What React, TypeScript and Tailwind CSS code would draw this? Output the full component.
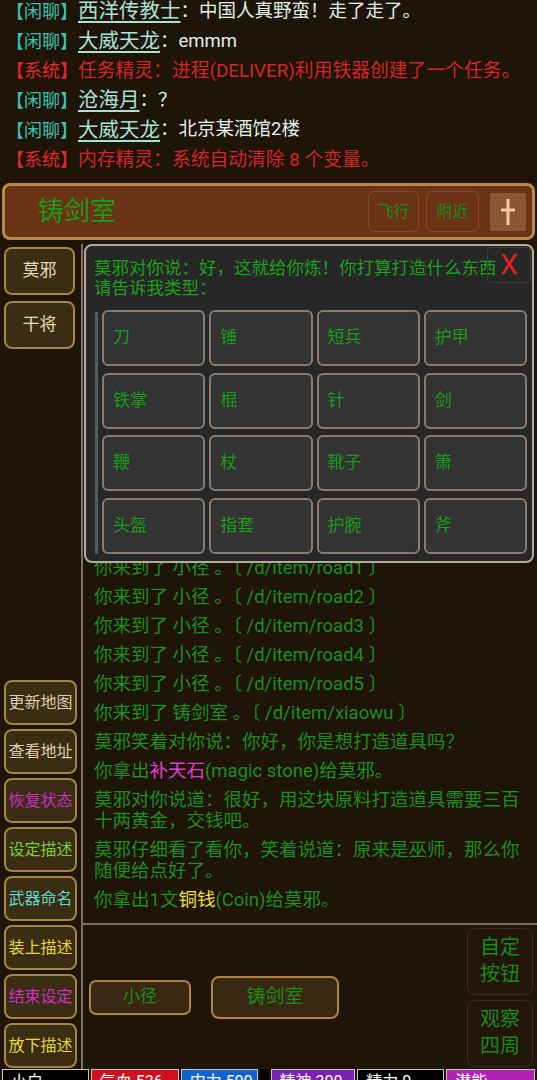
import React from "react";

type ChatLine = { kind: "chat" | "sys"; name?: string; text: string };

const CHAT: ChatLine[] = [
  { kind: "chat", name: "西洋传教士", text: "：中国人真野蛮！走了走了。" },
  { kind: "chat", name: "大威天龙", text: "：emmm" },
  { kind: "sys", text: "任务精灵：进程(DELIVER)利用铁器创建了一个任务。" },
  { kind: "chat", name: "沧海月", text: "：？" },
  { kind: "chat", name: "大威天龙", text: "：北京某酒馆2楼" },
  { kind: "sys", text: "内存精灵：系统自动清除 8 个变量。" },
];

const TYPES = [
  "刀", "锤", "短兵", "护甲",
  "铁掌", "棍", "针", "剑",
  "鞭", "杖", "靴子", "箫",
  "头盔", "指套", "护腕", "斧",
];

const SIDE_BUTTONS: { label: string; color: string }[] = [
  { label: "更新地图", color: "text-[#dccbb0]" },
  { label: "查看地址", color: "text-[#dccbb0]" },
  { label: "恢复状态", color: "text-[#c42fc4]" },
  { label: "设定描述", color: "text-[#74d03c]" },
  { label: "武器命名", color: "text-[#5fd6c8]" },
  { label: "装上描述", color: "text-[#e6d83c]" },
  { label: "结束设定", color: "text-[#d02ec4]" },
  { label: "放下描述", color: "text-[#e6d83c]" },
];

const ROADS = ["road1", "road2", "road3", "road4", "road5"];

const FONT = "font-['Roboto','Noto_Sans_CJK_SC',sans-serif]";

function LogEntry({ children }: { children: React.ReactNode }) {
  return <p className="mt-[8px] whitespace-pre-wrap text-[18.5px] leading-[21px] text-[#1d8f1d]">{children}</p>;
}

export default function App() {
  return (
    <div className={`flex h-[1080px] w-[537px] flex-col overflow-hidden bg-[#1f1408] ${FONT}`}>
      {/* chat channel */}
      <div className="h-[180px] shrink-0 px-[6px]">
        <div className="-mt-[3px] flex flex-col">
          {CHAT.map((c, i) => (
            <div key={i} className="flex h-[29.6px] items-center whitespace-nowrap text-[18.5px]">
              {c.kind === "chat" ? (
                <>
                  <span className="text-[18px] text-[#3cc0b0]">【闲聊】</span>
                  <span className="text-[20.5px] text-[#a8e2d8] underline underline-offset-[3px]">{c.name}</span>
                  <span className="text-[#e0f0ea]">{c.text}</span>
                </>
              ) : (
                <>
                  <span className="text-[18px] text-[#e42a2a]">【系统】</span>
                  <span className="text-[18.8px] text-[#d42626]">{c.text}</span>
                </>
              )}
            </div>
          ))}
        </div>
      </div>

      {/* room title bar */}
      <div className="mx-[2px] mt-[3px] flex h-[57px] shrink-0 items-center rounded-[8px] border-[3px] border-[#b98a45] bg-[#6a3316] pl-[33px] pr-[6px]">
        <span className="flex-1 text-[26px] text-[#1a9a1a]">铸剑室</span>
        <div className="flex h-[41px] w-[51px] items-center justify-center rounded-[6px] border border-[#8a4a26] text-[16px] text-[#1a8a1a]">
          飞行
        </div>
        <div className="ml-[7px] flex h-[41px] w-[53px] items-center justify-center rounded-[6px] border border-[#8a4a26] text-[16px] text-[#1a8a1a]">
          附近
        </div>
        <div className="ml-[11px] flex h-[38px] w-[36px] items-center justify-center bg-[#8b5536]">
          <svg width="16" height="26" viewBox="0 0 16 26">
            <line x1="8" y1="0" x2="8" y2="26" stroke="#f5caa2" strokeWidth="3" />
            <line x1="1" y1="11" x2="15" y2="11" stroke="#f5caa2" strokeWidth="3" />
          </svg>
        </div>
      </div>

      {/* main */}
      <div className="mt-[4px] flex h-[825px] shrink-0">
        {/* left column */}
        <div className="flex w-[83px] shrink-0 flex-col border-r-[2px] border-[#7d6e5e] pl-[4px]">
          <div className="mt-[3px] flex h-[48px] w-[71px] items-center justify-center rounded-[8px] border-2 border-[#a58545] bg-[#3b2d13] text-[17px] text-[#ead8b8]">
            莫邪
          </div>
          <div className="mt-[6px] flex h-[48px] w-[71px] items-center justify-center rounded-[8px] border-2 border-[#a58545] bg-[#3b2d13] text-[17px] text-[#ead8b8]">
            干将
          </div>
          <div className="flex-1" />
          <div className="flex flex-col gap-[4px] pb-[1px]">
            {SIDE_BUTTONS.map((b) => (
              <div
                key={b.label}
                className={`flex h-[45px] w-[73px] items-center justify-center rounded-[8px] border-2 border-[#a58545] bg-[#3b2d13] text-[16px] ${b.color}`}
              >
                {b.label}
              </div>
            ))}
          </div>
        </div>

        {/* right */}
        <div className="relative flex min-w-0 flex-1 flex-col">
          <div className="flex flex-1 flex-col justify-end overflow-hidden pb-[12px] pl-[11px] pr-[8px]">
            {ROADS.map((r) => (
              <LogEntry key={r}>{`你来到了 小径 。〔 /d/item/${r} 〕`}</LogEntry>
            ))}
            <LogEntry>{"你来到了 铸剑室 。〔 /d/item/xiaowu 〕"}</LogEntry>
            <LogEntry>莫邪笑着对你说：你好，你是想打造道具吗？</LogEntry>
            <LogEntry>
              你拿出<span className="text-[#e23ed2]">补天石</span>(magic stone)给莫邪。
            </LogEntry>
            <LogEntry>莫邪对你说道：很好，用这块原料打造道具需要三百十两黄金，交钱吧。</LogEntry>
            <LogEntry>莫邪仔细看了看你，笑着说道：原来是巫师，那么你随便给点好了。</LogEntry>
            <LogEntry>
              你拿出1文<span className="text-[#f2e43e]">铜钱</span>(Coin)给莫邪。
            </LogEntry>
          </div>

          <div className="flex h-[146px] shrink-0 items-center border-t-2 border-[#7d7060] pl-[6px] pr-[4px]">
            <div className="flex h-[35px] w-[102px] items-center justify-center rounded-[7px] border-2 border-[#b08244] bg-[#382812] text-[17px] text-[#1a8c1a]">
              小径
            </div>
            <div className="ml-[20px] flex h-[43px] w-[128px] items-center justify-center rounded-[8px] border-2 border-[#b08244] bg-[#382812] text-[19px] text-[#1a8c1a]">
              铸剑室
            </div>
            <div className="flex-1" />
            <div className="flex flex-col gap-[5px]">
              <div className="flex h-[67px] w-[66px] items-center justify-center rounded-[8px] border border-[#3e2c1a] bg-[#22160a] text-center text-[20px] leading-[27px] text-[#1a8a1a]">
                自定
                <br />
                按钮
              </div>
              <div className="flex h-[67px] w-[66px] items-center justify-center rounded-[8px] border border-[#3e2c1a] bg-[#22160a] text-center text-[20px] leading-[27px] text-[#1a8a1a]">
                观察
                <br />
                四周
              </div>
            </div>
          </div>

          {/* forge dialog */}
          <div className="absolute left-[1px] top-0 flex h-[319px] w-[450px] flex-col rounded-[8px] border-2 border-[#b3ab9b] bg-[#272727]">
            <div className="whitespace-nowrap pl-[8px] pt-[12px] text-[17.5px] leading-[20px] text-[#1aa01a]">
              <div>莫邪对你说：好，这就给你炼！你打算打造什么东西</div>
              <div>请告诉我类型：</div>
            </div>
            <div className="absolute right-[1px] top-[1px] flex h-[36px] w-[44px] items-center justify-center rounded-[4px] border border-[#3e3e3e] text-[28px] leading-none text-[#e42020]">
              X
            </div>
            <div className="mt-[12px] flex pl-[9px] pr-[5px]">
              <div className="mt-[2px] w-[3px] bg-[#4f5e64]" />
              <div className="ml-[4px] grid flex-1 grid-cols-4 gap-x-[4px] gap-y-[6.5px]">
                {TYPES.map((t) => (
                  <div
                    key={t}
                    className="flex h-[56px] items-center rounded-[6px] border-2 border-[#8a7b6f] bg-[#333333] pl-[9px] text-[17px] text-[#1a9a1a]"
                  >
                    {t}
                  </div>
                ))}
              </div>
            </div>
          </div>
        </div>
      </div>

      {/* status bar */}
      <div className="flex h-[30px] shrink-0 gap-[2px] px-[2px] text-[16px] leading-[20px] text-white">
        <div className="w-[87px] border border-[#c8c8c8] bg-black pl-[8px] pt-[2px]">小白</div>
        <div className="w-[88px] border border-[#c8c8c8] bg-[#d01020] pl-[8px] pt-[2px]">气血 536</div>
        <div className="w-[77px] border border-[#c8c8c8] bg-[#1262d0] pl-[8px] pt-[2px]">内力 500</div>
        <div className="w-[9px] bg-black" />
        <div className="w-[85px] border border-[#c8c8c8] bg-[#7a22b2] pl-[8px] pt-[2px]">精神 300</div>
        <div className="w-[87px] border border-[#c8c8c8] bg-black pl-[8px] pt-[2px]">精力 0</div>
        <div className="w-[89px] border border-[#c8c8c8] bg-[#b022b2] pl-[8px] pt-[2px]">潜能 200000</div>
      </div>
    </div>
  );
}
